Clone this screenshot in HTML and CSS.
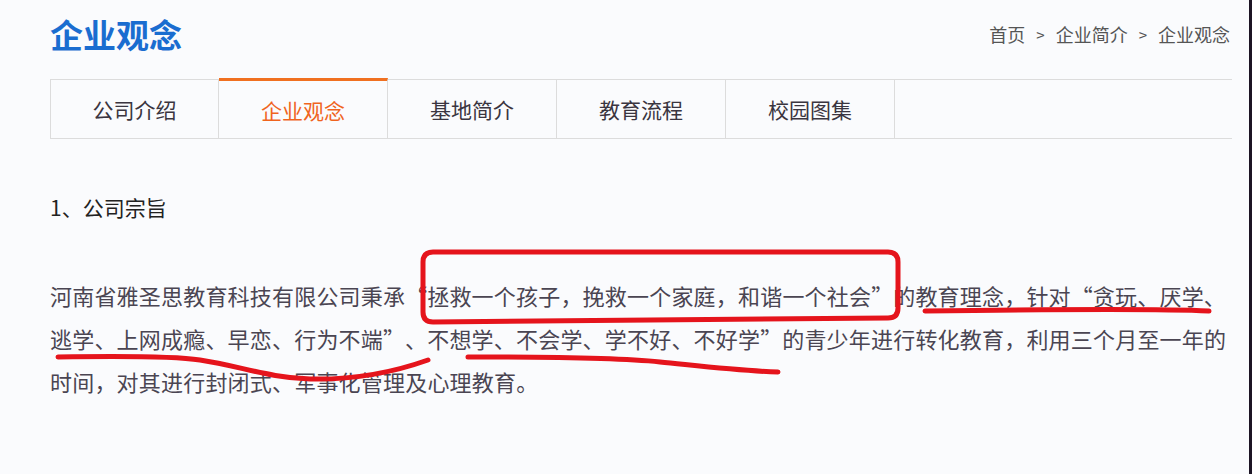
FILE: index.html
```html
<!DOCTYPE html>
<html lang="zh-CN">
<head>
  <meta charset="UTF-8" />
  <meta name="viewport" content="width=device-width, initial-scale=1.0"/>
  <title>企业观念</title>
  <link rel="stylesheet" href="styles.css">
</head>
<body>
  <div class="page">
    <div class="content">
      <div class="header">
        <h1>企业观念</h1>
        <div class="crumbs">
          <span>首页</span><span class="sep">&gt;</span><span>企业简介</span><span class="sep">&gt;</span><span>企业观念</span>
        </div>
      </div>

      <div class="tabs">
        <div class="tab">公司介绍</div>
        <div class="tab active">企业观念</div>
        <div class="tab">基地简介</div>
        <div class="tab">教育流程</div>
        <div class="tab">校园图集</div>
        <div class="tab-rest"></div>
      </div>

      <h2 class="section-title">1、公司宗旨</h2>

      <p class="text">河南省雅圣思教育科技有限公司秉承<span class="lq">“</span>拯救一个孩子，挽救一个家庭，和谐一个社会<span class="rq">”</span>的教育理念，针对<span class="lq">“</span>贪玩、厌学、逃学、上网成瘾、早恋、行为不端<span class="rq">”</span>、不想学、不会学、学不好、不好学<span class="rq">”</span>的青少年进行转化教育，利用三个月至一年的时间，对其进行封闭式、军事化管理及心理教育。</p>
    </div>

    <!-- red marker annotations drawn over the text -->
    <svg class="marks" width="1252" height="474" viewBox="0 0 1252 474">
      <path d="M433 252 L888 252 Q898 252 898 262 L898 308 Q898 318 888 318 L433 322 Q423 322 423 312 L423 262 Q423 252 433 252 Z" />
      <path d="M925 311 C1000 310 1150 308 1209 311" />
      <path d="M58 357 C120 356 180 357 200 360 C240 366 270 378 310 379 C360 380 400 370 428 360" />
      <path d="M468 357 C540 357 620 358 660 362 C700 366 740 371 778 372" />
    </svg>
  </div>
</body>
</html>
```

FILE: styles.css
```css
* {
  box-sizing: border-box;
  margin: 0;
  padding: 0;
  font-family: "Noto Sans CJK SC", "Noto Sans", sans-serif;
}

body {
  background: #fafbfd;
  color: #333;
}

.page {
  position: relative;
  width: 1252px;
  height: 474px;
  border-right: 3px solid #1c1424;
  overflow: hidden;
}

.content {
  margin-left: 50px;
  width: 1182px;
}

.header {
  display: flex;
  justify-content: space-between;
  align-items: center;
  height: 79px;
  padding-bottom: 11px;
}

.header h1 {
  font-size: 33px;
  font-weight: bold;
  color: #1a6dd0;
  line-height: 40px;
}

.crumbs {
  font-size: 18px;
  color: #555;
  display: flex;
  align-items: center;
  margin-right: 2px;
}

.crumbs .sep {
  margin: 0 11px;
  font-size: 15px;
}

.tabs {
  display: flex;
  height: 60px;
  border-bottom: 1px solid #dcdcdc;
}

.tab {
  width: 169px;
  display: flex;
  align-items: center;
  justify-content: center;
  font-size: 21px;
  color: #3a3540;
  border-top: 1px solid #dcdcdc;
  border-right: 1px solid #dcdcdc;
}

.tab:first-child {
  border-left: 1px solid #dcdcdc;
}

.tab.active {
  color: #f0641e;
  border-top: 3px solid #f07020;
  margin-top: -1px;
}

.tab-rest {
  flex: 1;
  border-top: 1px solid #dcdcdc;
}

.section-title {
  margin-top: 53px;
  font-size: 21px;
  font-weight: normal;
  line-height: 30px;
  color: #222;
}

.text {
  margin-top: 52px;
  width: 1182px;
  font-size: 22px;
  letter-spacing: 0.2px;
  line-height: 43px;
  color: #4a4552;
}

.text .lq,
.text .rq {
  display: inline-block;
  width: 1em;
}

.text .lq {
  text-align: right;
}

.text .rq {
  text-align: left;
}

.marks {
  position: absolute;
  left: 0;
  top: 0;
  pointer-events: none;
}

.marks path {
  fill: none;
  stroke: #e5141c;
  stroke-width: 5;
  stroke-linecap: round;
  stroke-linejoin: round;
}
```
